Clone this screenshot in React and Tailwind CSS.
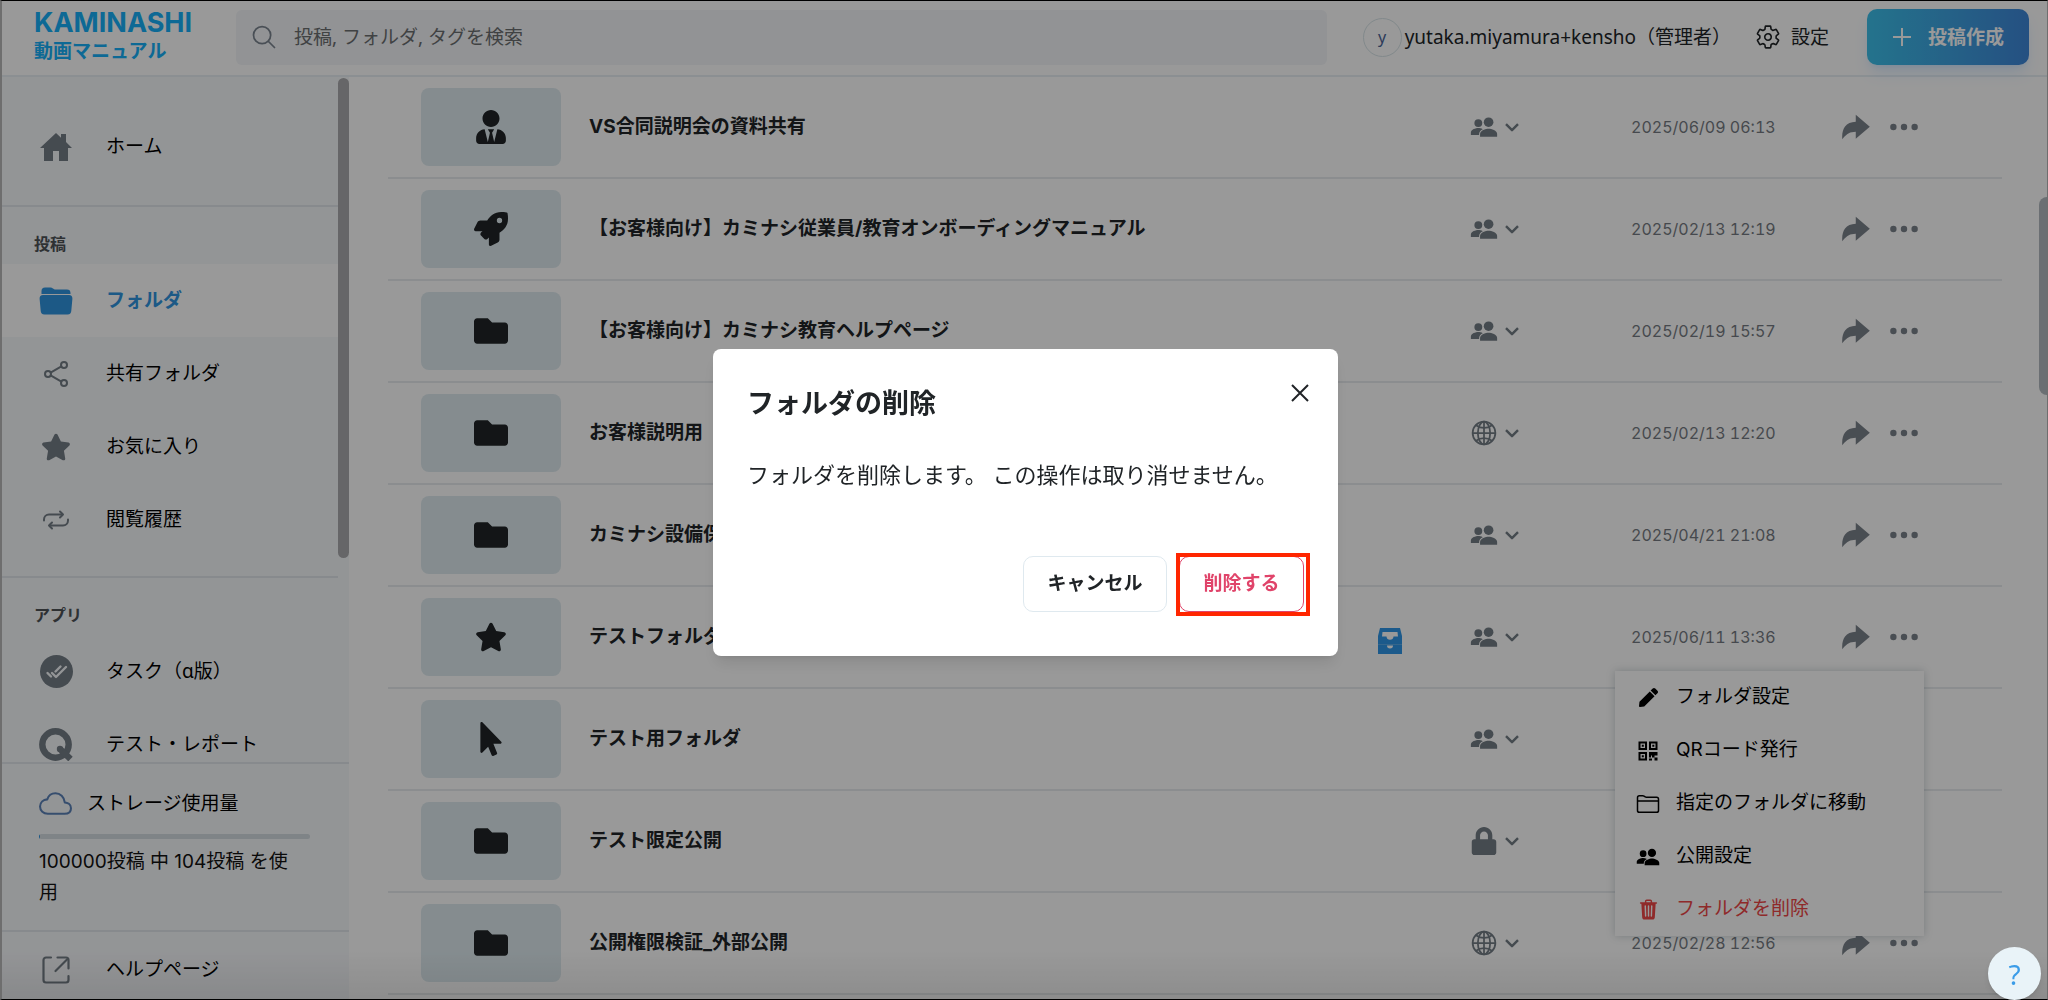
import React from "react";
import {
  IoHomeSharp,
  IoFolderOutline,
  IoShareSocialOutline,
  IoRepeat,
  IoCloudOutline,
  IoSearchOutline,
  IoSettingsOutline,
  IoPeopleSharp,
  IoGlobeOutline,
  IoArrowRedoSharp,
  IoEllipsisHorizontal,
  IoTrash,
} from "react-icons/io5";
import { FaUserTie, FaRocket, FaFolder, FaStar, FaMousePointer, FaLock, FaPen } from "react-icons/fa";

function TaskIcon() {
  return (
    <svg viewBox="0 0 33 33" className="size-[33px]" aria-hidden="true">
      <circle cx="16.5" cy="16.5" r="16.5" fill="currentColor" />
      <g fill="none" stroke="#f6f8fb" strokeWidth="2.4" strokeLinecap="round" strokeLinejoin="round">
        <path d="M7.5 18l3.500 3.500" />
        <path d="M12 18l4 4 10-10" />
        <path d="M15.500 16.500l5-5" />
      </g>
    </svg>
  );
}

function QIcon() {
  return (
    <svg viewBox="0 0 34 33" className="h-[33px] w-[34px]" aria-hidden="true">
      <circle cx="16.500" cy="16.500" r="13.200" fill="none" stroke="currentColor" strokeWidth="6.400" />
      <path d="M21 21l10.500 10" stroke="currentColor" strokeWidth="6.400" />
      <circle cx="21" cy="21" r="3.200" fill="currentColor" />
    </svg>
  );
}

function OpenFolderIcon() {
  return (
    <svg viewBox="0 0 34 28" className="h-7 w-[34px]" fill="currentColor" aria-hidden="true">
      <path d="M2.500 7V4a3.500 3.500 0 0 1 3.500-3.500h5.500c1 0 1.600.3 2.400.9l1 .7c.6.4 1 .5 1.700.5H28A3.500 3.500 0 0 1 31.500 6v1z" />
      <path d="M4 8h26c2.300 0 3.600 1.500 3.400 3.700l-1.100 12.100A3.800 3.800 0 0 1 28.600 27.500H5.400a3.800 3.800 0 0 1-3.700-3.700L.6 11.700C.4 9.500 1.700 8 4 8z" />
    </svg>
  );
}

function QrIcon() {
  return (
    <svg viewBox="0 0 20 20" className="size-5" aria-hidden="true">
      <g fill="none" stroke="currentColor" strokeWidth="2">
        <path d="M1.500 1.500h6.500v6.500H1.500zM12 1.500h6.500v6.500H12zM1.500 12h6.500v6.500H1.500z" />
      </g>
      <path
        fill="currentColor"
        d="M3.800 3.800h2v2h-2zM14.300 3.800h2v2h-2zM3.800 14.300h2v2h-2zM11 11h8.500v3.500h-3v2h-2.500v-2H13v2h-2zM16.500 16.500h3v3h-3zM11 17.500h3v2h-3z"
      />
    </svg>
  );
}

function ExternalIcon() {
  return (
    <svg viewBox="0 0 28 28" className="size-7" fill="none" stroke="currentColor" strokeWidth="2.200" strokeLinecap="round" strokeLinejoin="round" aria-hidden="true">
      <path d="M9 1.500H4A2.500 2.500 0 0 0 1.500 4v20A2.500 2.500 0 0 0 4 26.500h20a2.500 2.500 0 0 0 2.500-2.500v-4" />
      <path d="M15.500 1.500H24A2.500 2.500 0 0 1 26.500 4v8.500" />
      <path d="M13.500 15L25.500 3" />
    </svg>
  );
}

function CabinetIcon() {
  return (
    <svg viewBox="0 0 24 26" className="h-[26px] w-6 text-[#2f97e8]" aria-hidden="true">
      <path fill="currentColor" d="M2 0h20l2 8v18H0V8z" />
      <path fill="#fff" d="M4.500 4h15l.5 4.500h-4.500c0 2-1.500 3.300-3.500 3.300s-3.500-1.300-3.500-3.300H4z" />
      <path fill="#fff" d="M9 17.500h6a3 3 0 0 1-6 0z" />
      <path stroke="#5aaae8" strokeWidth="1" d="M0 16.500h24" />
    </svg>
  );
}

function ChevronIcon() {
  return (
    <svg viewBox="0 0 14 9" className="h-[9px] w-3.5" fill="none" stroke="currentColor" strokeWidth="2.400" strokeLinejoin="round" aria-hidden="true">
      <path d="M1 1.200l6 6 6-6" />
    </svg>
  );
}

function NavItem({ icon, label, active }) {
  return (
    <a
      href="#"
      className={
        active
          ? "flex h-[73px] items-center bg-white pl-[37px] font-bold text-[#2f94e0]"
          : "flex h-[73px] items-center pl-[37px] text-black"
      }
    >
      <span className={active ? "flex w-[34px] shrink-0 justify-center" : "flex w-[34px] shrink-0 justify-center text-[#737d85]"}>
        {icon}
      </span>
      <span className="ml-[33px]">{label}</span>
    </a>
  );
}

function Header() {
  return (
    <header className="flex h-[76px] shrink-0 items-center border-b-2 border-[#e8eff3] bg-white pb-0.5">
      <a href="#" className="flex w-[234px] shrink-0 flex-col pl-8 font-bold text-[#16b0f8]">
        <span className="text-[27px] leading-6 font-[Inter,sans-serif]">KAMINASHI</span>
        <span className="mt-1 text-[19px] leading-6">動画マニュアル</span>
      </a>
      <label className="flex h-[55px] min-w-0 flex-1 items-center rounded-md bg-[#f3f5f8] pl-3.5">
        <IoSearchOutline className="size-7 shrink-0 text-[#7b848f]" />
        <input
          type="search"
          placeholder="投稿, フォルダ, タグを検索"
          className="ml-4 min-w-0 flex-1 bg-transparent outline-none placeholder:text-[#6b6e70]"
        />
      </label>
      <div className="ml-9 flex shrink-0 items-center text-[#202427]">
        <span className="flex size-[39px] items-center justify-center rounded-full border border-[#d8e4e8] text-base text-[#4a6496]">y</span>
        <span className="ml-[3px]">yutaka.miyamura+kensho（管理者）</span>
      </div>
      <button type="button" className="ml-6 flex shrink-0 items-center gap-2.5 text-[#202427]">
        <IoSettingsOutline className="size-[26px]" />
        設定
      </button>
      <button
        type="button"
        className="mr-[18px] ml-[38px] flex h-14 w-[162px] shrink-0 items-center justify-center gap-4 rounded-[10px] bg-linear-to-r from-[#3cc0ea] to-[#3f86d8] font-bold text-white shadow-lg shadow-blue-300/30"
      >
        <svg viewBox="0 0 20 20" className="size-5" stroke="currentColor" strokeWidth="2" aria-hidden="true">
          <path d="M10 1v18M1 10h18" />
        </svg>
        投稿作成
      </button>
    </header>
  );
}

function Sidebar() {
  return (
    <aside className="flex w-[347px] shrink-0 flex-col bg-[#f6f8fb]">
      <div className="flex min-h-0 flex-1">
        <nav className="min-w-0 flex-1 overflow-hidden">
          <div className="border-b-2 border-[#e2e6eb] pt-[33px] pb-[22px]">
            <NavItem icon={<IoHomeSharp className="size-8" />} label="ホーム" />
          </div>
          <div className="border-b-2 border-[#e2e6eb] pb-5">
            <h2 className="flex h-[57px] items-end pb-2 pl-8 text-base font-bold text-[#4d5256]">投稿</h2>
            <NavItem active icon={<OpenFolderIcon />} label="フォルダ" />
            <NavItem icon={<IoShareSocialOutline className="size-8" />} label="共有フォルダ" />
            <NavItem icon={<FaStar className="size-[30px]" />} label="お気に入り" />
            <NavItem icon={<IoRepeat className="size-8" />} label="閲覧履歴" />
          </div>
          <div>
            <h2 className="flex h-[57px] items-end pb-2 pl-8 text-base font-bold text-[#4d5256]">アプリ</h2>
            <NavItem icon={<TaskIcon />} label="タスク（α版）" />
            <NavItem icon={<QIcon />} label="テスト・レポート" />
          </div>
        </nav>
        <div className="w-[11px] shrink-0">
          <div className="mt-px h-[480px] rounded-full bg-[#aaabad]" />
        </div>
      </div>
      <div className="h-[168px] border-t-2 border-[#e2e6eb] px-[37px] pt-[23px]">
        <div className="flex items-center gap-[15px]">
          <IoCloudOutline className="size-[33px] text-[#5b82b8]" />
          <span className="leading-[33px]">ストレージ使用量</span>
        </div>
        <div className="mt-3.5 h-[5px] w-[271px] overflow-hidden rounded-full bg-[#d4dce1]">
          <div className="h-full w-px bg-[#2f94e0]" />
        </div>
        <p className="mt-[7px] w-[258px] leading-[31px] text-[#111] font-[Inter,'Noto_Sans_CJK_JP',sans-serif]">100000投稿 中 104投稿 を使用</p>
      </div>
      <div className="h-[69px] border-t-2 border-[#e2e6eb] pt-px">
        <NavItem icon={<ExternalIcon />} label="ヘルプページ" />
      </div>
    </aside>
  );
}

function FolderMenu() {
  const items = [
    { icon: <FaPen className="size-[19px]" />, label: "フォルダ設定" },
    { icon: <QrIcon />, label: "QRコード発行" },
    { icon: <IoFolderOutline className="size-6" />, label: "指定のフォルダに移動" },
    { icon: <IoPeopleSharp className="size-6" />, label: "公開設定" },
    { icon: <IoTrash className="size-[23px]" />, label: "フォルダを削除", danger: true },
  ];
  return (
    <div className="absolute top-[84px] right-[78px] z-10 w-[309px] bg-white shadow-[0_0_8px_rgba(80,100,110,0.3)] font-[Inter,'Noto_Sans_CJK_JP',sans-serif]">
      {items.map((item) => (
        <button
          key={item.label}
          type="button"
          className={
            item.danger
              ? "flex h-[53px] w-full items-center gap-4 pl-[21px] text-[#ee4646]"
              : "flex h-[53px] w-full items-center gap-4 pl-[21px] text-black"
          }
        >
          <span className="flex w-6 justify-center">{item.icon}</span>
          {item.label}
        </button>
      ))}
    </div>
  );
}

const folder = <FaFolder className="size-[34px]" />;
const people = <IoPeopleSharp className="size-7" />;
const globe = <IoGlobeOutline className="size-7" />;

const rows = [
  { icon: <FaUserTie className="size-[34px]" />, name: "VS合同説明会の資料共有", scope: people, date: "2025/06/09 06:13" },
  { icon: <FaRocket className="size-[34px]" />, name: "【お客様向け】カミナシ従業員/教育オンボーディングマニュアル", scope: people, date: "2025/02/13 12:19" },
  { icon: folder, name: "【お客様向け】カミナシ教育ヘルプページ", scope: people, date: "2025/02/19 15:57" },
  { icon: folder, name: "お客様説明用", scope: globe, date: "2025/02/13 12:20" },
  { icon: folder, name: "カミナシ設備保全", scope: people, date: "2025/04/21 21:08" },
  { icon: <FaStar className="size-8" />, name: "テストフォルダ", scope: people, date: "2025/06/11 13:36", cabinet: true, menu: true },
  { icon: <FaMousePointer className="size-[34px]" />, name: "テスト用フォルダ", scope: people },
  { icon: folder, name: "テスト限定公開", scope: <FaLock className="size-7" /> },
  { icon: folder, name: "公開権限検証_外部公開", scope: globe, date: "2025/02/28 12:56" },
];

function FolderTable() {
  return (
    <table className="w-full table-fixed border-separate border-spacing-0">
      <colgroup>
        <col className="w-[201px]" />
        <col />
        <col className="w-[92px]" />
        <col className="w-[161px]" />
        <col className="w-[208px]" />
        <col className="w-[163px]" />
      </colgroup>
      <tbody>
        {rows.map((row) => (
          <tr key={row.name} className="h-[102px] [&>td]:border-b-2 [&>td]:border-[#e8ebee]">
            <td className="pl-[33px]">
              <div className="flex h-[78px] w-[140px] items-center justify-center rounded-lg bg-[#deeaef] text-[#202427]">{row.icon}</div>
            </td>
            <td className="truncate font-bold text-[#202427] font-[Inter,'Noto_Sans_CJK_JP',sans-serif]">{row.name}</td>
            <td>{row.cabinet && <div className="pt-2"><CabinetIcon /></div>}</td>
            <td>
              <button type="button" aria-label="公開範囲" className="flex items-center gap-[7px] text-[#737d85]">
                <span className="flex w-7 justify-center">{row.scope}</span>
                <ChevronIcon />
              </button>
            </td>
            <td className="text-base text-[#767b82] tabular-nums font-[Inter,sans-serif]">{row.date}</td>
            <td className="relative">
              <div className="flex items-center gap-3.5 text-[#7b828b]">
                <button type="button" aria-label="共有">
                  <IoArrowRedoSharp className="size-[34px]" />
                </button>
                <button type="button" aria-label="メニュー">
                  <IoEllipsisHorizontal className="size-[34px]" />
                </button>
              </div>
              {row.menu && <FolderMenu />}
            </td>
          </tr>
        ))}
      </tbody>
    </table>
  );
}

function DeleteDialog() {
  return (
    <div className="fixed inset-0 z-20 flex items-center justify-center bg-black/40 pt-1 pl-[3px]">
      <div role="dialog" aria-modal="true" aria-labelledby="dialog-title" className="w-[625px] rounded-lg bg-white px-[34px] pt-[34px] pb-11 text-[#202427] shadow-lg">
        <div className="flex items-start justify-between">
          <h1 id="dialog-title" className="text-[27px] leading-10 font-bold">フォルダの削除</h1>
          <button type="button" aria-label="閉じる" className="-mt-1 -mr-2.5 flex size-7 items-center justify-center">
            <svg viewBox="0 0 18 18" className="size-[18px]" stroke="currentColor" strokeWidth="2" aria-hidden="true">
              <path d="M1 1l16 16M17 1L1 17" />
            </svg>
          </button>
        </div>
        <p className="mt-[35px] text-[22px] leading-8 whitespace-nowrap">フォルダを削除します。 この操作は取り消せません。</p>
        <div className="mt-[66px] flex justify-end gap-3">
          <button type="button" className="h-14 w-36 rounded-[10px] border border-[#dfe9ef] font-bold">キャンセル</button>
          <div className="relative">
            <button type="button" className="h-14 w-[125px] rounded-[10px] border border-[#e0446a] font-bold text-[#e0446a]">削除する</button>
            <div className="pointer-events-none absolute -top-[3px] -right-1.5 -bottom-1 -left-[3px] border-4 border-[#ff2600]" />
          </div>
        </div>
      </div>
    </div>
  );
}

export default function App() {
  return (
    <div className="relative flex h-screen flex-col overflow-hidden border-y border-r border-l-2 border-y-black border-x-[#b8b8b8] bg-white text-[19px] font-['Noto_Sans','Noto_Sans_CJK_JP',sans-serif]">
      <Header />
      <div className="flex min-h-0 flex-1">
        <Sidebar />
        <main className="relative min-w-0 flex-1 overflow-hidden pr-[45px] pl-[39px]">
          <FolderTable />
          <div className="absolute top-[120px] right-0 h-[198px] w-2 rounded-l-full bg-[#b2bac0]" />
        </main>
      </div>
      <div className="pointer-events-none absolute inset-x-0 bottom-0 h-12 bg-linear-to-t from-black/8 to-transparent" />
      <DeleteDialog />
      <button
        type="button"
        aria-label="ヘルプ"
        className="fixed right-[7px] bottom-0 z-30 flex size-[53px] items-center justify-center rounded-full bg-[#e9f3f8] text-[28px] text-[#3b9ce8] shadow-md"
      >
        ?
      </button>
    </div>
  );
}
